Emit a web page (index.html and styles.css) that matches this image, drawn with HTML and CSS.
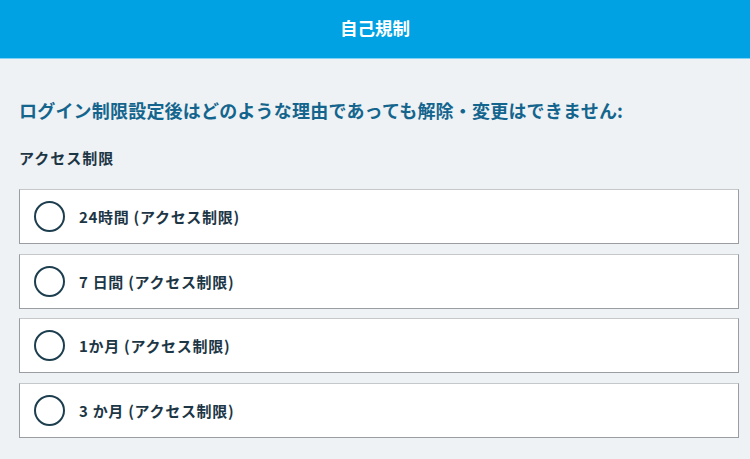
FILE: index.html
```html
<!DOCTYPE html>
<html>
<head lang="ja">
    <meta charset="UTF-8">
    <meta name="viewport" content="width=device-width, initial-scale=1">
    <title>自己規制</title>
    <link rel="stylesheet" href="styles.css">
</head>
<body>
    <div class="header">自己規制</div>

    <div class="content">
        <p class="notice">ログイン制限設定後はどのような理由であっても解除・変更はできません:</p>
        <p class="label">アクセス制限</p>

        <div class="options">
            <label class="option"><span class="radio"></span><span>24時間 (アクセス制限)</span></label>
            <label class="option"><span class="radio"></span><span>7 日間 (アクセス制限)</span></label>
            <label class="option"><span class="radio"></span><span>1か月 (アクセス制限)</span></label>
            <label class="option"><span class="radio"></span><span>3 か月 (アクセス制限)</span></label>
        </div>
    </div>
</body>
</html>
```

FILE: styles.css
```css
body{
    margin: 0;
    padding: 0;
    background-color: #eef2f4;
    font-family: "Noto Sans CJK JP", "Noto Sans", sans-serif;
}
.header{
    height: 58px;
    line-height: 56px;
    background-color: #00a2e3;
    border-bottom: 1px solid #7fd2f3;
    color: #fff;
    text-align: center;
    font-size: 17.5px;
    font-weight: bold;
}
.content{
    padding: 0 11px 0 19px;
}
.notice{
    margin: 36px 0 0 0;
    font-size: 18px;
    letter-spacing: 0.2px;
    line-height: 30px;
    font-weight: bold;
    color: #14658e;
}
.label{
    margin: 21px 0 0 0;
    font-size: 15px;
    letter-spacing: 1px;
    line-height: 24px;
    font-weight: bold;
    color: #1d3645;
}
.options{
    display: flex;
    flex-direction: column;
    gap: 9.5px;
    margin-top: 19px;
}
.option{
    display: flex;
    align-items: center;
    gap: 14px;
    box-sizing: border-box;
    height: 55px;
    padding-left: 14px;
    background-color: #fff;
    border: 1px solid #9a9ea2;
    border-top-color: #c4c8cb;
    font-size: 15px;
    letter-spacing: 0.7px;
    font-weight: bold;
    color: #1d3645;
}
.radio{
    display: block;
    box-sizing: border-box;
    width: 31px;
    height: 31px;
    border: 2px solid #1d3e4e;
    border-radius: 50%;
}
```
